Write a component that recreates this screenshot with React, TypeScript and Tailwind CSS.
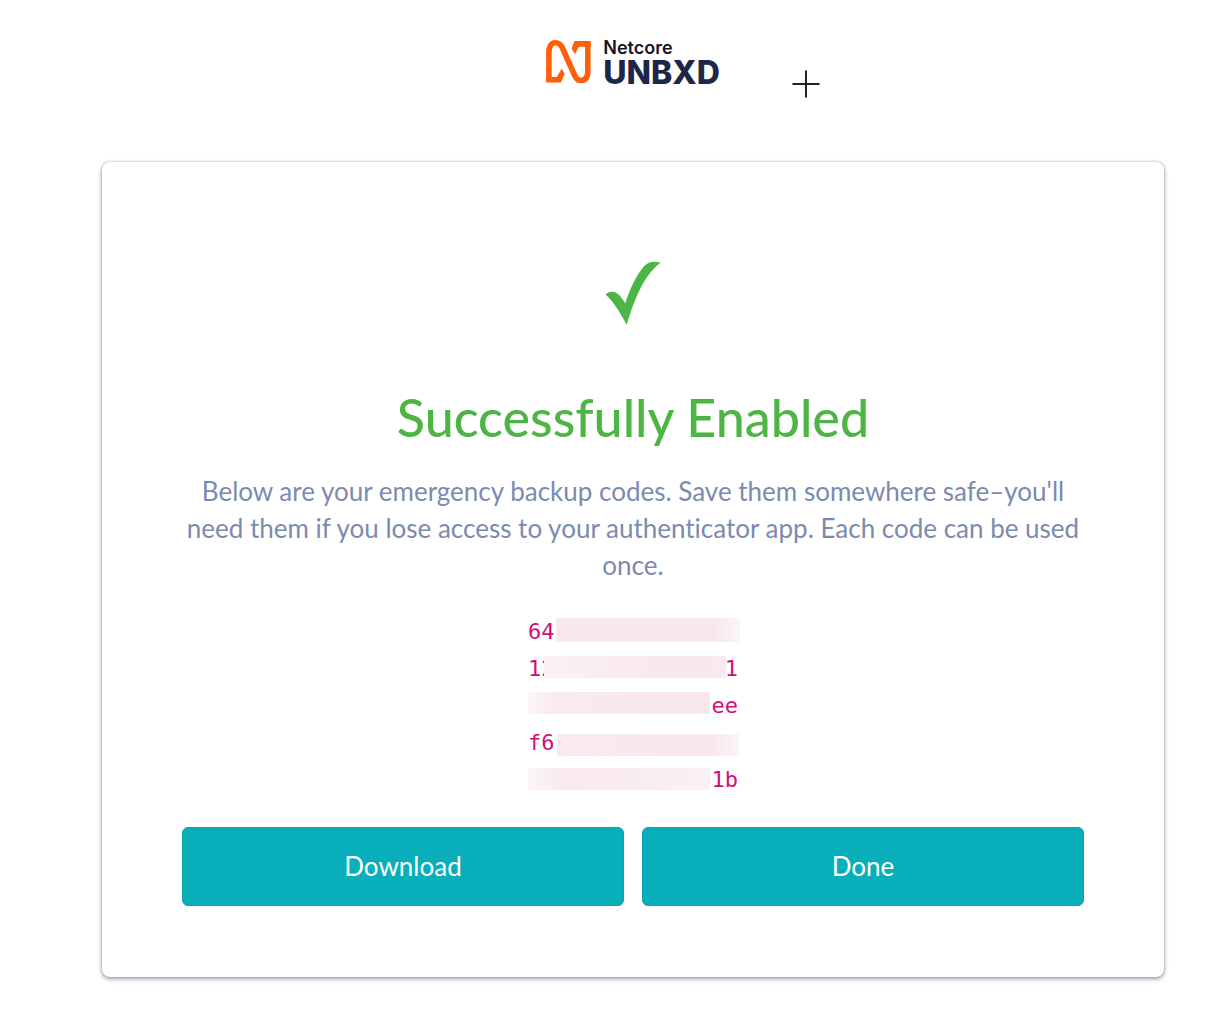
type BackupCode = { start: string; end: string; mask: string };

const codes: BackupCode[] = [
  { start: "64", end: "", mask: "left-[28px] w-[184px] top-[5px] h-6 bg-linear-to-r from-[#f9e8ee] via-[#f8e7ec] via-85% to-[#fcf5f8]" },
  { start: "12", end: "1", mask: "left-4 w-[182px] top-[6px] h-[22px] bg-linear-to-r from-[#fbf1f4] via-[#f8e7ec] via-75% to-[#f9eaef]" },
  { start: "", end: "ee", mask: "left-0 w-[182px] top-[5px] h-[22px] bg-linear-to-r from-[#fcf6f8] via-[#f9eaef] via-15% to-[#f8e7ec]" },
  { start: "f6", end: "", mask: "left-[29px] w-[182px] top-[10px] h-[22px] bg-linear-to-r from-[#f9eaef] via-[#f8e8ed] via-85% to-[#fcf5f8]" },
  { start: "", end: "1b", mask: "left-0 w-[182px] top-[7px] h-[22px] bg-linear-to-r from-[#fcf6f8] via-[#f8e9ee] via-20% to-[#fbf0f4]" },
];

function Logo() {
  return (
    <div className="flex items-start gap-3">
      <svg className="h-11 w-[45px]" viewBox="0 0 45 44" fill="none" aria-hidden="true">
        <path
          d="M2.9 40 V13 C2.9 5.5 5.8 2.8 9.5 2.8 C13 2.8 15 5 16.5 8 L28.5 35 C30 38.5 32 40.5 35 40.5 C39.3 40.5 41.8 37.5 41.8 31 V2"
          stroke="#ff5f0a"
          strokeWidth="5.6"
        />
        <path d="M0.1 42.5H15L18.6 34L15.8 28.5L10.8 37H0.1Z M44.6 1H28.5L25.6 8.5L29 14L33 6.7H44.6Z" fill="#ff5f0a" />
      </svg>
      <div className="font-['Inter',sans-serif]">
        <div className="text-lg leading-4 font-semibold text-[#181425]">Netcore</div>
        <div className="text-[32px] leading-[34px] font-extrabold text-[#1e2747]">UNBXD</div>
      </div>
    </div>
  );
}

export default function App() {
  return (
    <div className="min-h-screen bg-white pr-[68px] pb-[35px] pl-[102px] font-['Lato',sans-serif] [font-variant-ligatures:none]">
      <header className="relative flex h-[162px] justify-center pt-10">
        <Logo />
        <svg className="absolute top-[70px] left-1/2 ml-[159px] size-7" viewBox="0 0 28 28" stroke="#222" strokeWidth="2" aria-hidden="true">
          <path d="M0.5 14H27.5M14 0.5V27.5" />
        </svg>
      </header>
      <main className="rounded-lg bg-white px-20 pt-[99px] pb-[71px] text-center shadow-[0_2px_4px_rgba(60,75,110,0.5),0_0_3px_rgba(60,75,110,0.35)]">
        <svg className="mx-auto h-16 w-14" viewBox="0 0 56 64" fill="#4cb543" aria-hidden="true">
          <path d="M0.5 33.5 C3 31 6 30.2 9 31 C13.5 32 17 37 20.2 42.3 C24.5 29 31 15.5 36.5 8.5 C41.5 1.5 46 -0.5 55.5 1.5 C48 7.5 42.5 14.5 38 22.5 C31 35 26.5 48 21.7 63.8 C14.5 50.5 8.5 40.5 0.5 33.5Z" />
        </svg>
        <h1 className="mt-[60px] text-[52px] leading-[64px] font-medium text-[#4cb543]">Successfully Enabled</h1>
        <p className="mt-6 text-[26px] leading-[37px] text-[#7b8baf]">
          Below are your emergency backup codes. Save them somewhere safe–you'll need them if you lose access to your
          authenticator app. Each code can be used once.
        </p>
        <ul className="mx-auto mt-[29px] w-[210px] font-['DejaVu_Sans_Mono',monospace] text-[22px] leading-[37px] text-[#d10f78]">
          {codes.map((code, i) => (
            <li key={i} className="relative flex h-[37px] justify-between">
              <span>{code.start}</span>
              <span>{code.end}</span>
              <span className={`absolute ${code.mask}`} />
            </li>
          ))}
        </ul>
        <div className="mt-[29px] grid grid-cols-2 gap-[18px] text-[26px] text-white">
          <button type="button" className="h-[79px] rounded-md border border-[#0aa3ae] bg-[#08aeb9]">Download</button>
          <button type="button" className="h-[79px] rounded-md border border-[#0aa3ae] bg-[#08aeb9]">Done</button>
        </div>
      </main>
    </div>
  );
}
